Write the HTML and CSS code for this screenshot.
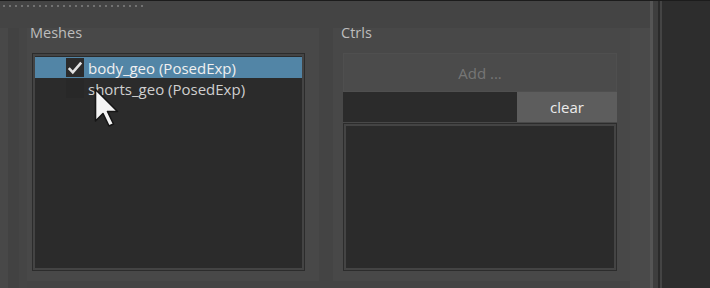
FILE: index.html
```html
<!DOCTYPE html>
<html lang="en">
<head>
    <meta charset="UTF-8">
    <meta name="viewport" content="width=device-width, initial-scale=1.0">
    <title>Mesh Controls</title>
    <link rel="stylesheet" href="styles.css">
</head>
<body>
    <div class="window">
        <div class="main">
            <div class="top-strip">
                <div class="dotted"></div>
            </div>
            <div class="panels">
                <div class="side-strip"></div>

                <div class="group group-meshes">
                    <div class="group-title">Meshes</div>
                    <div class="list-frame">
                        <div class="list">
                            <div class="row selected">
                                <span class="check checked">
                                    <svg width="16" height="14" viewBox="0 0 16 14">
                                        <path d="M1.8 7.2 L5.8 11.4 L14.2 1.6" fill="none" stroke="#e2e2e2" stroke-width="2.6"/>
                                    </svg>
                                </span>
                                <span class="row-label">body_geo (PosedExp)</span>
                            </div>
                            <div class="row">
                                <span class="check"></span>
                                <span class="row-label">shorts_geo (PosedExp)</span>
                            </div>
                        </div>
                    </div>
                </div>

                <div class="group group-ctrls">
                    <div class="group-title">Ctrls</div>
                    <button class="add-btn" type="button">Add ...</button>
                    <div class="filter-row">
                        <input class="filter-input" type="text">
                        <button class="clear-btn" type="button">clear</button>
                    </div>
                    <div class="list-frame ctrls-list">
                        <div class="list"></div>
                    </div>
                </div>

                <div class="side-gap"></div>
            </div>
        </div>

        <div class="splitter">
            <span class="line light"></span>
            <span class="line mid"></span>
            <span class="line dark"></span>
            <span class="line mid2"></span>
        </div>
        <div class="right-pane"></div>

        <!-- mouse pointer over the list -->
        <svg class="cursor" width="26" height="40" viewBox="0 0 26 40">
            <path d="M1.5 1.5 L1.5 33 L9 25.5 L15 38 L19.5 36 L13.5 23.5 L23.5 23.5 Z" fill="#f4f4f4" stroke="#161616" stroke-width="1.6" stroke-linejoin="round"/>
        </svg>
    </div>
</body>
</html>
```

FILE: styles.css
```css
* {
    margin: 0;
    padding: 0;
    box-sizing: border-box;
    font-family: 'Open Sans', 'Noto Sans', sans-serif;
}

body {
    background-color: #444444;
    width: 710px;
    height: 288px;
    overflow: hidden;
}

.window {
    position: relative;
    display: flex;
    height: 288px;
    border-top: 1px solid #1c1c1c;
}

.main {
    width: 650px;
    display: flex;
    flex-direction: column;
}

.top-strip {
    height: 27px;
    padding: 4px 0 0 3px;
}

.dotted {
    width: 144px;
    height: 2px;
    background-image: repeating-linear-gradient(90deg, #727272 0 2px, transparent 2px 6px);
}

.panels {
    flex: 1;
    display: flex;
}

.side-strip {
    width: 27px;
    background: linear-gradient(90deg, #484848 0 8px, #424242 8px 19px, #454545 19px);
}

.group {
    background-color: #484848;
    height: 253px;
    display: flex;
    flex-direction: column;
}

.group-title {
    height: 29px;
    font-size: 14.5px;
    color: #bdbdbd;
    line-height: 18px;
    margin-top: -4px;
}

.group-meshes {
    width: 292px;
    padding: 0 14px 0 5px;
}

.group-meshes .group-title {
    margin-left: -2px;
}

.group-ctrls {
    width: 297px;
    margin-left: 14px;
    padding: 0 13px 0 10px;
}

.group-ctrls .group-title {
    margin-left: -2px;
}

.list-frame {
    border: 1px solid #2c2c2c;
    padding: 2px;
    background-color: #444444;
    height: 218px;
}

.list {
    background-color: #2b2b2b;
    height: 100%;
    padding-top: 1px;
}

.row {
    height: 21px;
    display: flex;
    align-items: center;
    padding-left: 31px;
    color: #cfcfcf;
    font-size: 15px;
}

.row.selected {
    background-color: #5285a6;
    color: #f0f0f0;
}

.check {
    width: 18px;
    height: 19px;
    background-color: #282828;
    margin-right: 4px;
    display: flex;
    align-items: center;
    justify-content: center;
}

.check.checked {
    background-color: #2b2b2b;
}

.add-btn {
    height: 39px;
    background-color: #4b4b4b;
    border: 1px solid #4f4f4f;
    color: #767676;
    font-size: 15px;
    cursor: pointer;
}

.filter-row {
    display: flex;
    height: 30px;
}

.filter-input {
    width: 174px;
    background-color: #2b2b2b;
    border: none;
    outline: none;
}

.clear-btn {
    flex: 1;
    background-color: #5d5d5d;
    border: none;
    color: #ececec;
    font-size: 15px;
    cursor: pointer;
}

.ctrls-list {
    margin-top: 1px;
    height: 148px;
}

.side-gap {
    width: 20px;
    background-color: #4a4a4a;
}

.splitter {
    display: flex;
    width: 12px;
}

.line {
    height: 100%;
}

.line.light {
    width: 3px;
    background-color: #555555;
}

.line.mid {
    width: 5px;
    background-color: #3e3e3e;
}

.line.dark {
    width: 2px;
    background-color: #2a2a2a;
}

.line.mid2 {
    width: 2px;
    background-color: #444444;
}

.right-pane {
    flex: 1;
    background-color: #2d2d2d;
}

.cursor {
    position: absolute;
    left: 94px;
    top: 87px;
}
```
